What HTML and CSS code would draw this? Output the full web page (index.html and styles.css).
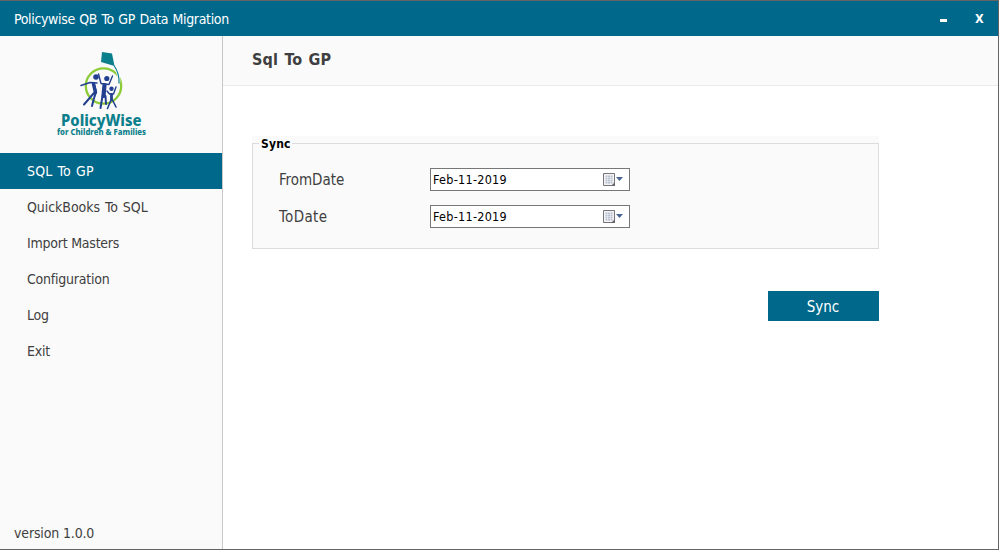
FILE: index.html
```html
<!DOCTYPE html>
<html lang="en">
<head>
<meta charset="utf-8">
<title>Policywise QB To GP Data Migration</title>
<link rel="stylesheet" href="styles.css">
</head>
<body>
<div class="window">
  <header class="titlebar">
    <span class="titlebar-text">Policywise QB To GP Data Migration</span>
    <span class="minimize" role="button" aria-label="Minimize"></span>
    <span class="close" role="button">X</span>
  </header>
  <div class="body">
    <aside class="sidebar">
      <svg class="logo" viewBox="0 0 105 97" role="img">
        <circle cx="53.5" cy="41" r="17.7" fill="none" stroke="#8ccb38" stroke-width="2.3"/>
        <path d="M63 20.500c4 3.500 6.500 10 5.800 17" fill="none" stroke="#fafafa" stroke-width="3"/>
        <path d="M52 7l10 1.500 2.500 12.500-13.500-4z" fill="#0b7f8c"/>
        <path d="M64 20.500c3.500 5 5.500 10 5 18" fill="none" stroke="#0b7f8c" stroke-width="1.200"/>
        <g fill="#22408f">
          <circle cx="46" cy="32" r="2.800"/><circle cx="56.800" cy="33.500" r="2.600"/><circle cx="61.500" cy="43.700" r="2.200"/>
        </g>
        <g fill="none" stroke="#22408f" stroke-linecap="round" stroke-linejoin="round">
          <path d="M31 40.500l9-3 7 .5" stroke-width="1.500"/>
          <path d="M44 39l2 8-2.500 8-1.500 6 M44 48l-10 11.500" stroke-width="2"/>
          <path d="M43.500 39l2 8.500" stroke-width="3.400"/>
          <path d="M48.500 29l2.500 9.500 8 1 3.500-8.500" stroke-width="1.400"/>
          <path d="M54.500 40l-1 11" stroke-width="4.200"/>
          <path d="M52.500 51l-2 12 M55.500 51l.5 8" stroke-width="2"/>
          <path d="M57 46l2.500 3h4l2.500-7" stroke-width="1.400"/>
          <path d="M61.500 49.500v5" stroke-width="2.800"/>
          <path d="M61 55l-3.500 8.500 M62.500 55l3.500 7" stroke-width="1.600"/>
        </g>
        <text class="logo-name" x="11" y="80.500" textLength="80.500" lengthAdjust="spacingAndGlyphs">PolicyWise</text>
        <text class="logo-sub" x="7" y="90.300" textLength="89" lengthAdjust="spacingAndGlyphs">for Children &amp; Families</text>
      </svg>
      <nav class="menu">
        <a class="item wide active">SQL To GP</a>
        <a class="item wide">QuickBooks To SQL</a>
        <a class="item">Import Masters</a>
        <a class="item">Configuration</a>
        <a class="item">Log</a>
        <a class="item">Exit</a>
      </nav>
      <div class="version">version 1.0.0</div>
    </aside>
    <main class="content">
      <h1 class="heading">Sql To GP</h1>
      <section class="panel">
        <div class="group">
          <div class="frame">
            <span class="legend">Sync</span>
            <div class="row"><label>FromDate</label>
              <div class="date"><span>Feb-11-2019</span>
                <svg class="picker" viewBox="0 0 22 14"><path d="M.5.500h11v12h-11z" fill="#f3f3f5" stroke="#777579"/><path d="M2.500 2.500h7v8h-7z" fill="#b9c1d0"/><path d="M2 4.500h8M2 6.500h8M2 8.500h8M4.500 2v9M7.500 2v9" stroke="#eef0f4" stroke-width=".6"/><path d="M8 13l4-4v4z" fill="#68656b"/><path d="M13 4h7l-3.500 4z" fill="#4a6591"/></svg>
              </div></div>
            <div class="row"><label class="to-label">ToDate</label>
              <div class="date"><span>Feb-11-2019</span>
                <svg class="picker" viewBox="0 0 22 14"><path d="M.5.500h11v12h-11z" fill="#f3f3f5" stroke="#777579"/><path d="M2.500 2.500h7v8h-7z" fill="#b9c1d0"/><path d="M2 4.500h8M2 6.500h8M2 8.500h8M4.500 2v9M7.500 2v9" stroke="#eef0f4" stroke-width=".6"/><path d="M8 13l4-4v4z" fill="#68656b"/><path d="M13 4h7l-3.500 4z" fill="#4a6591"/></svg>
              </div></div>
          </div>
        </div>
        <button class="sync">Sync</button>
      </section>
    </main>
  </div>
</div>
</body>
</html>
```
FILE: styles.css
```css
* { box-sizing: border-box; }
body { margin: 0; background: #fff; font-family: "DejaVu Sans Condensed", "DejaVu Sans", sans-serif; font-stretch: condensed; font-size: 14px; color: #3f3f41; white-space: nowrap; }
.window { width: 999px; height: 550px; border: 1px solid #646464; border-left: 0; display: flex; flex-direction: column; background: #fff; }
.titlebar { height: 35px; background: #00688b; color: #fff; display: flex; align-items: center; padding: 0 14px; }
.titlebar-text { flex: 1; letter-spacing: -0.35px; word-spacing: 0.8px; }
.minimize { width: 7px; height: 3px; background: #fff; margin: 4px 28px 0 0; }
.close { font-weight: bold; font-size: 12.5px; width: 9px; }
.body { flex: 1; display: flex; }
.sidebar { width: 223px; background: #fafafa; border-right: 1px solid #c8c8c8; display: flex; flex-direction: column; }
.logo { display: block; width: 105px; height: 97px; margin: 9px 0 11px 50px; }
.logo-name { font: 800 16px "Noto Sans", "Open Sans", sans-serif; fill: #0b7f8c; }
.logo-sub { font: 800 8px "Noto Sans", "Open Sans", sans-serif; fill: #0b7f8c; }
.menu { display: flex; flex-direction: column; }
.item { height: 36px; display: flex; align-items: center; padding-left: 27px; letter-spacing: -0.23px; }
.wide { letter-spacing: -0.05px; word-spacing: 1px; }
.active { background: #00688b; color: #fff; letter-spacing: 0.15px; }
.version { margin: auto 0 7px 14px; line-height: 17px; letter-spacing: -0.15px; }
.content { flex: 1; display: flex; flex-direction: column; }
.heading { margin: 0; height: 50px; background: #fafafa; border-bottom: 1px solid #ebebeb; font-size: 16px; line-height: 47px; padding-left: 29px; letter-spacing: 0.2px; word-spacing: 1px; }
.panel { padding: 50px 0 0 29px; width: 656px; display: flex; flex-direction: column; align-items: flex-end; }
.group { width: 627px; height: 113px; background: #fafafa; padding-top: 7px; }
.frame { height: 106px; border: 1px solid #dcdcdc; padding-left: 26px; }
.legend { display: block; width: 33px; height: 16px; margin: -8px 0 0 -20px; padding-left: 2px; background: #fafafa; color: #000; font-weight: bold; font-size: 12px; line-height: 16px; letter-spacing: 0.2px; }
.row { height: 23px; margin-top: 16px; display: flex; align-items: center; font-size: 15px; }
.row + .row { margin-top: 14px; }
.row label { width: 151px; letter-spacing: -0.05px; }
.row .to-label { letter-spacing: 0.35px; }
.date { width: 200px; height: 23px; background: #fff; border: 1px solid #777; display: flex; align-items: center; justify-content: space-between; padding: 0 4px 0 2px; color: #000; font-size: 12.5px; letter-spacing: 0.28px; }
.picker { width: 22px; height: 14px; }
.sync { width: 111px; height: 30px; margin-top: 42px; border: 0; padding: 2px 1px 0 0; background: #00688b; color: #fff; font: inherit; font-size: 15px; }
```
